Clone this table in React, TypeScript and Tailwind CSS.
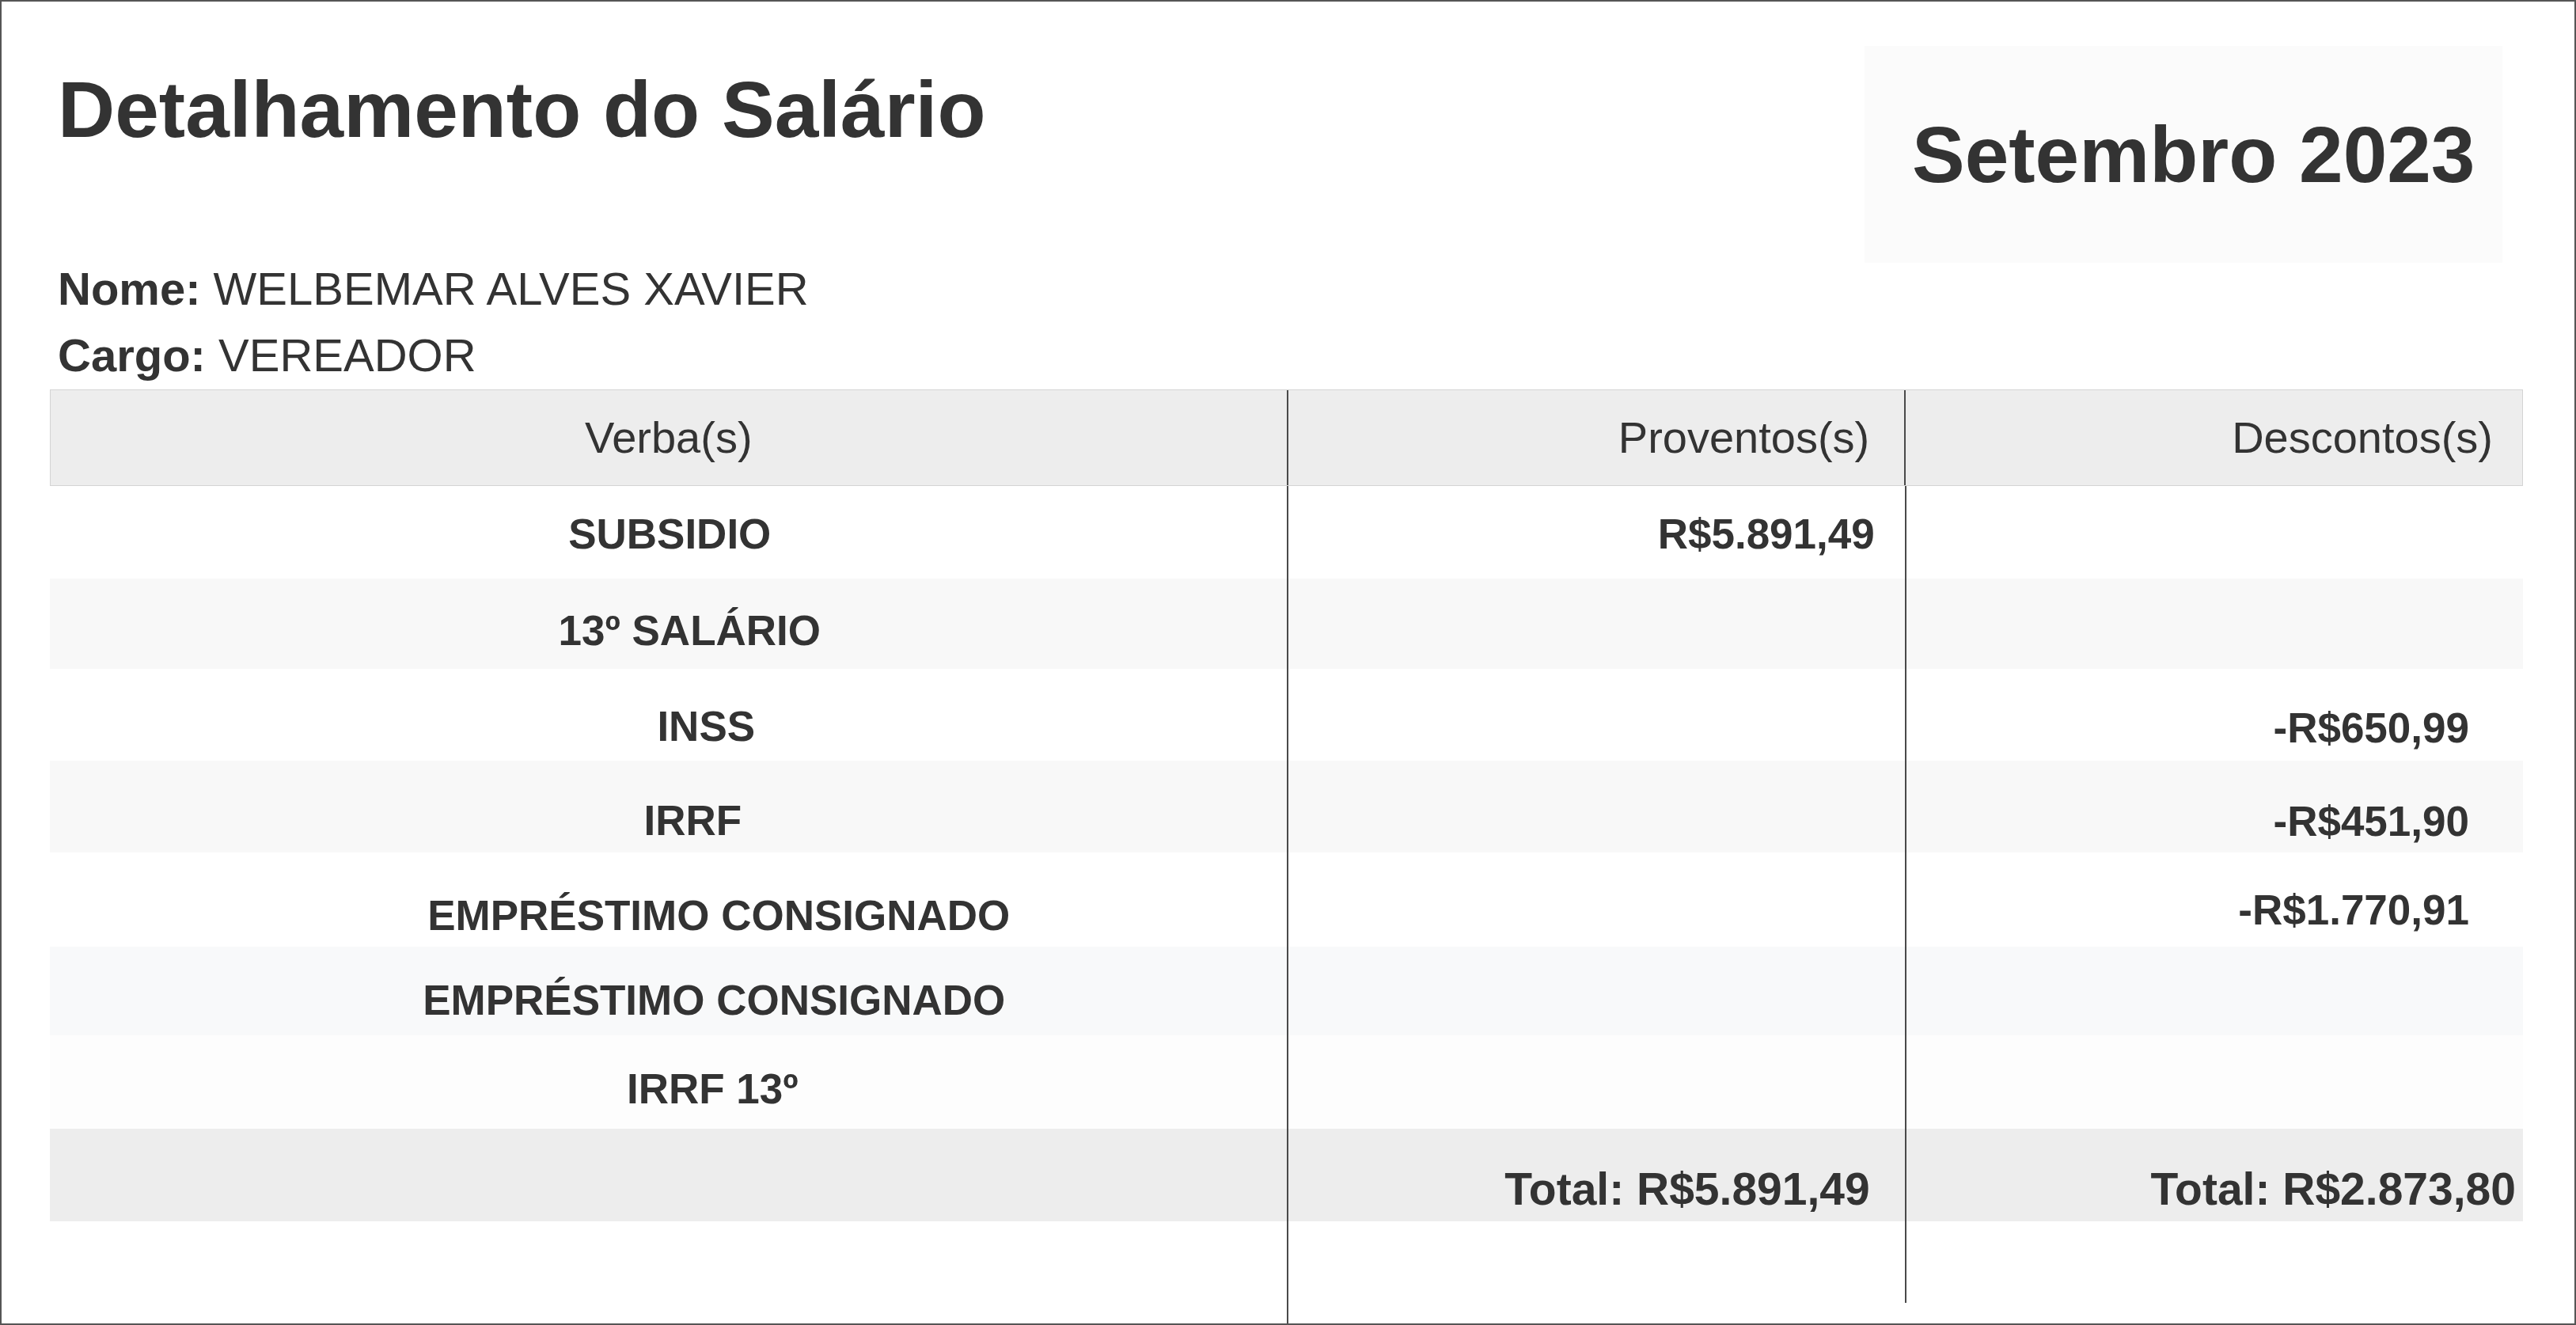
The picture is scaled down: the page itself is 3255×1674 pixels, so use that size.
import * as React from 'react'

interface SalaryRow {
  verba: string
  provento: string
  desconto: string
  rowCls: string
  verbaCls: string
  provCls: string
  descCls: string
}

const rows: SalaryRow[] = [
  {
    verba: 'SUBSIDIO',
    provento: 'R$5.891,49',
    desconto: '',
    rowCls: 'h-[117px] bg-white',
    verbaCls: 'pt-[3px] pl-[4px]',
    provCls: 'pt-[3px]',
    descCls: 'pt-[3px]',
  },
  {
    verba: '13º SALÁRIO',
    provento: '',
    desconto: '',
    rowCls: 'h-[114px] bg-[#f8f8f8]',
    verbaCls: 'pt-[16px] pl-[54px]',
    provCls: 'pt-[16px]',
    descCls: 'pt-[16px]',
  },
  {
    verba: 'INSS',
    provento: '',
    desconto: '-R$650,99',
    rowCls: 'h-[116px] bg-white',
    verbaCls: 'pt-[28px] pl-[96px]',
    provCls: 'pt-[30px]',
    descCls: 'pt-[32px]',
  },
  {
    verba: 'IRRF',
    provento: '',
    desconto: '-R$451,90',
    rowCls: 'h-[116px] bg-[#f8f8f8]',
    verbaCls: 'pt-[34px] pl-[62px]',
    provCls: 'pt-[34px]',
    descCls: 'pt-[36px]',
  },
  {
    verba: 'EMPRÉSTIMO CONSIGNADO',
    provento: '',
    desconto: '-R$1.770,91',
    rowCls: 'h-[119px] bg-white',
    verbaCls: 'pt-[40px] pl-[128px]',
    provCls: 'pt-[40px]',
    descCls: 'pt-[26px]',
  },
  {
    verba: 'EMPRÉSTIMO CONSIGNADO',
    provento: '',
    desconto: '',
    rowCls: 'h-[112px] bg-[#f8f9fa]',
    verbaCls: 'pt-[22px] pl-[116px]',
    provCls: 'pt-[22px]',
    descCls: 'pt-[22px]',
  },
  {
    verba: 'IRRF 13º',
    provento: '',
    desconto: '',
    rowCls: 'h-[118px] bg-[#fdfdfd]',
    verbaCls: 'pt-[16px] pl-[112px]',
    provCls: 'pt-[16px]',
    descCls: 'pt-[16px]',
  },
]

const divider = 'border-l-2 border-l-[#4a4a4a]'

const SalaryTable = () => {
  return (
    <div className="mt-px mr-[65px] ml-[61px] flex flex-1 flex-col">
      {/* cabeçalho */}
      <div className="grid h-[122px] grid-cols-[2fr_1fr_1fr] border border-[#d4d4d4] bg-[#ededed] text-[56px] leading-none">
        <div className="flex items-center justify-center">Verba(s)</div>
        <div className={`flex items-center justify-end pr-[44px] ${divider}`}>
          Proventos(s)
        </div>
        <div className={`flex items-center justify-end pr-[37px] ${divider}`}>
          Descontos(s)
        </div>
      </div>

      {rows.map((row, index) => (
        <div
          key={index}
          className={`grid grid-cols-[2fr_1fr_1fr] text-[53px] leading-none font-bold ${row.rowCls}`}
        >
          <div className={`flex items-center justify-center ${row.verbaCls}`}>
            {row.verba}
          </div>
          <div
            className={`flex items-center justify-end pr-[38px] ${divider} ${row.provCls}`}
          >
            {row.provento}
          </div>
          <div
            className={`flex items-center justify-end pr-[68px] ${divider} ${row.descCls}`}
          >
            {row.desconto}
          </div>
        </div>
      ))}

      {/* totais */}
      <div className="grid h-[117px] grid-cols-[2fr_1fr_1fr] bg-[#ededed] text-[57px] leading-none font-bold">
        <div />
        <div className={`flex items-center justify-end pt-[36px] pr-[44px] ${divider}`}>
          Total: R$5.891,49
        </div>
        <div className={`flex items-center justify-end pt-[36px] pr-[9px] ${divider}`}>
          Total: R$2.873,80
        </div>
      </div>

      <div className="grid flex-1 grid-cols-[2fr_1fr_1fr]">
        <div />
        <div className={divider} />
        <div className="flex flex-col">
          <div className={`mb-[26px] flex-1 ${divider}`} />
        </div>
      </div>
    </div>
  )
}

const App = () => {
  return (
    <div className="flex h-[1674px] w-full flex-col border-2 border-[#555] bg-white font-['Liberation_Sans',Arial,sans-serif] text-[#333]">
      <div className="flex items-start justify-between pt-[56px] pr-[91px] pl-[71px]">
        <div className="mt-[30px]">
          <h1 className="text-[100px] leading-none font-bold">
            Detalhamento do Salário
          </h1>
          <div className="mt-[135px] text-[58px] leading-[84px]">
            <p>
              <span className="font-bold">Nome:</span> WELBEMAR ALVES XAVIER
            </p>
            <p>
              <span className="font-bold">Cargo:</span> VEREADOR
            </p>
          </div>
        </div>
        <div className="flex h-[274px] w-[806px] items-center bg-[#fbfbfb] pl-[60px]">
          <span className="text-[100px] leading-none font-bold">
            Setembro 2023
          </span>
        </div>
      </div>

      <SalaryTable />
    </div>
  )
}

export default App
